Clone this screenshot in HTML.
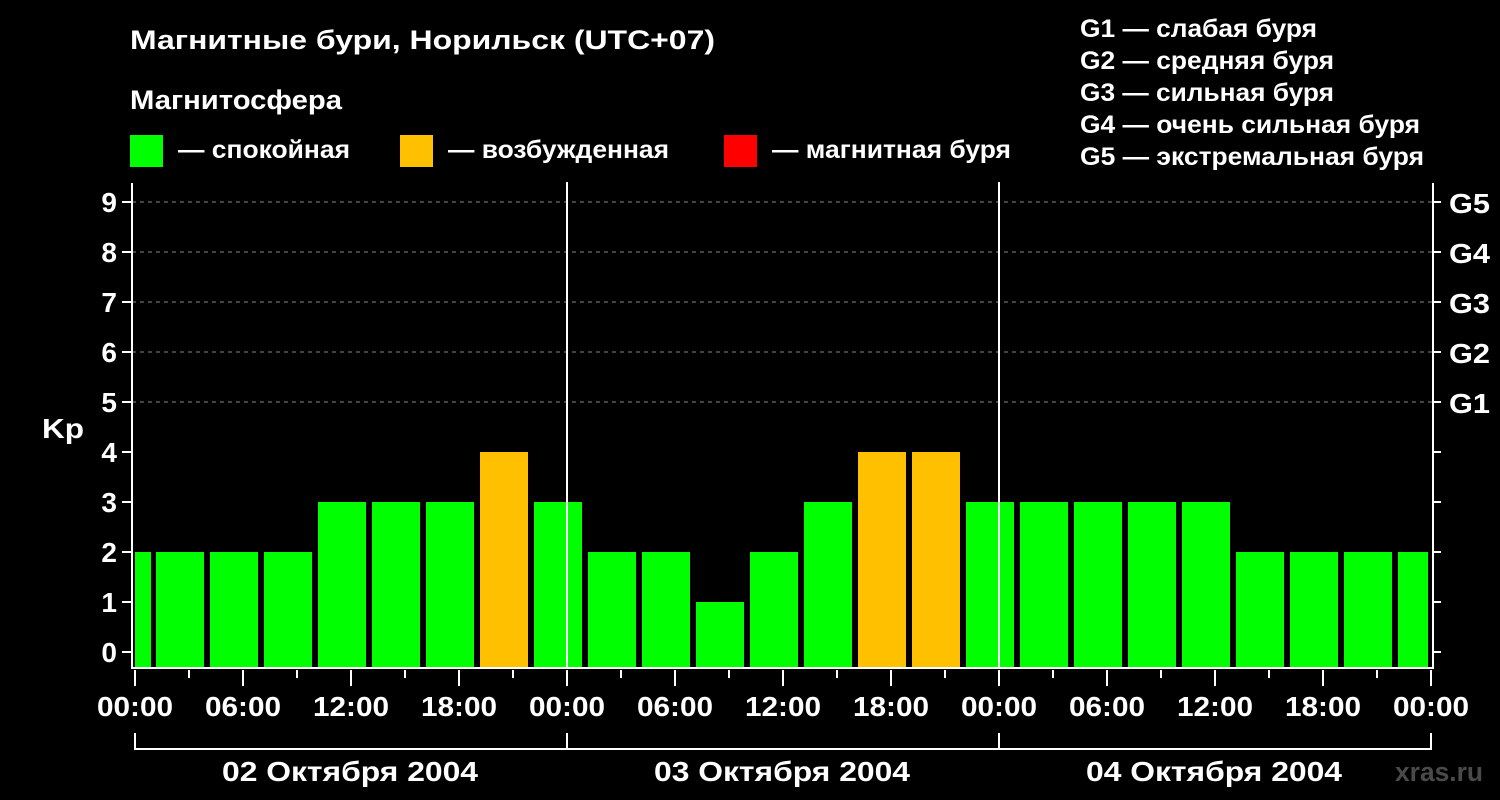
<!DOCTYPE html>
<html><head><meta charset="utf-8"><style>
html,body{margin:0;padding:0;background:#000;width:1500px;height:800px;overflow:hidden}
svg text{font-family:"Liberation Sans",sans-serif;font-weight:bold;fill:#fff}
</style></head><body>
<svg width="1500" height="800" xmlns="http://www.w3.org/2000/svg">
<rect width="1500" height="800" fill="#000"/>
<text x="130" y="49" font-size="27" textLength="585" lengthAdjust="spacingAndGlyphs">Магнитные бури, Норильск (UTC+07)</text>
<text x="130" y="109" font-size="27" textLength="212" lengthAdjust="spacingAndGlyphs">Магнитосфера</text>
<rect x="130" y="135" width="33" height="32" fill="#00ff00"/>
<text x="178" y="158" font-size="25" textLength="172" lengthAdjust="spacingAndGlyphs">— спокойная</text>
<rect x="400" y="135" width="33" height="32" fill="#ffc000"/>
<text x="448" y="158" font-size="25" textLength="221" lengthAdjust="spacingAndGlyphs">— возбужденная</text>
<rect x="724" y="135" width="33" height="32" fill="#ff0000"/>
<text x="772" y="158" font-size="25" textLength="239" lengthAdjust="spacingAndGlyphs">— магнитная буря</text>
<g font-size="25">
<text x="1080" y="37" textLength="237" lengthAdjust="spacingAndGlyphs">G1 — слабая буря</text>
<text x="1080" y="69" textLength="254" lengthAdjust="spacingAndGlyphs">G2 — средняя буря</text>
<text x="1080" y="101" textLength="254" lengthAdjust="spacingAndGlyphs">G3 — сильная буря</text>
<text x="1080" y="133" textLength="340" lengthAdjust="spacingAndGlyphs">G4 — очень сильная буря</text>
<text x="1080" y="165" textLength="344" lengthAdjust="spacingAndGlyphs">G5 — экстремальная буря</text>
</g>
<g stroke="#888" stroke-width="1" stroke-dasharray="4,4">
<line x1="132" y1="202" x2="1432" y2="202"/>
<line x1="132" y1="252" x2="1432" y2="252"/>
<line x1="132" y1="302" x2="1432" y2="302"/>
<line x1="132" y1="352" x2="1432" y2="352"/>
<line x1="132" y1="402" x2="1432" y2="402"/>
</g>
<g fill="#00ff00">
<rect x="135" y="552" width="16" height="116"/>
<rect x="156" y="552" width="48" height="116"/>
<rect x="210" y="552" width="48" height="116"/>
<rect x="264" y="552" width="48" height="116"/>
<rect x="318" y="502" width="48" height="166"/>
<rect x="372" y="502" width="48" height="166"/>
<rect x="426" y="502" width="48" height="166"/>
<rect x="534" y="502" width="48" height="166"/>
<rect x="588" y="552" width="48" height="116"/>
<rect x="642" y="552" width="48" height="116"/>
<rect x="696" y="602" width="48" height="66"/>
<rect x="750" y="552" width="48" height="116"/>
<rect x="804" y="502" width="48" height="166"/>
<rect x="966" y="502" width="48" height="166"/>
<rect x="1020" y="502" width="48" height="166"/>
<rect x="1074" y="502" width="48" height="166"/>
<rect x="1128" y="502" width="48" height="166"/>
<rect x="1182" y="502" width="48" height="166"/>
<rect x="1236" y="552" width="48" height="116"/>
<rect x="1290" y="552" width="48" height="116"/>
<rect x="1344" y="552" width="48" height="116"/>
<rect x="1398" y="552" width="30" height="116"/>
</g>
<g fill="#ffc000">
<rect x="480" y="452" width="48" height="216"/>
<rect x="858" y="452" width="48" height="216"/>
<rect x="912" y="452" width="48" height="216"/>
</g>
<g stroke="#fff" stroke-width="2" fill="none">
<path d="M132 183 V668 H1433 V183"/>
<line x1="567" y1="182" x2="567" y2="668"/>
<line x1="999" y1="182" x2="999" y2="668"/>
<path d="M122 652h10M122 602h10M122 552h10M122 502h10M122 452h10M122 402h10M122 352h10M122 302h10M122 252h10M122 202h10"/>
<path d="M1433 652h8M1433 602h8M1433 552h8M1433 502h8M1433 452h8M1433 402h8M1433 352h8M1433 302h8M1433 252h8M1433 202h8"/>
<path d="M135 670v16M243 670v16M351 670v16M459 670v16M567 670v16M675 670v16M783 670v16M891 670v16M999 670v16M1107 670v16M1215 670v16M1323 670v16M1431 670v16"/>
<path d="M189 670v8M297 670v8M405 670v8M513 670v8M621 670v8M729 670v8M837 670v8M945 670v8M1053 670v8M1161 670v8M1269 670v8M1377 670v8"/>
<path d="M135 733V749H1431V733M567 733v16M999 733v16"/>
</g>
<g font-size="28" text-anchor="end">
<text x="117" y="662">0</text><text x="117" y="612">1</text><text x="117" y="562">2</text>
<text x="117" y="512">3</text><text x="117" y="462">4</text><text x="117" y="412">5</text>
<text x="117" y="362">6</text><text x="117" y="312">7</text><text x="117" y="262">8</text>
<text x="117" y="212">9</text>
</g>
<text x="42" y="438" font-size="28" textLength="42" lengthAdjust="spacingAndGlyphs">Kp</text>
<g font-size="28">
<text x="1449" y="213" textLength="41" lengthAdjust="spacingAndGlyphs">G5</text><text x="1449" y="263" textLength="41" lengthAdjust="spacingAndGlyphs">G4</text><text x="1449" y="313" textLength="41" lengthAdjust="spacingAndGlyphs">G3</text>
<text x="1449" y="363" textLength="41" lengthAdjust="spacingAndGlyphs">G2</text><text x="1449" y="413" textLength="41" lengthAdjust="spacingAndGlyphs">G1</text>
</g>
<g font-size="28">
<text x="97" y="716" textLength="76" lengthAdjust="spacingAndGlyphs">00:00</text><text x="205" y="716" textLength="76" lengthAdjust="spacingAndGlyphs">06:00</text><text x="313" y="716" textLength="76" lengthAdjust="spacingAndGlyphs">12:00</text>
<text x="421" y="716" textLength="76" lengthAdjust="spacingAndGlyphs">18:00</text><text x="529" y="716" textLength="76" lengthAdjust="spacingAndGlyphs">00:00</text><text x="637" y="716" textLength="76" lengthAdjust="spacingAndGlyphs">06:00</text>
<text x="745" y="716" textLength="76" lengthAdjust="spacingAndGlyphs">12:00</text><text x="853" y="716" textLength="76" lengthAdjust="spacingAndGlyphs">18:00</text><text x="961" y="716" textLength="76" lengthAdjust="spacingAndGlyphs">00:00</text>
<text x="1069" y="716" textLength="76" lengthAdjust="spacingAndGlyphs">06:00</text><text x="1177" y="716" textLength="76" lengthAdjust="spacingAndGlyphs">12:00</text><text x="1285" y="716" textLength="76" lengthAdjust="spacingAndGlyphs">18:00</text>
<text x="1393" y="716" textLength="76" lengthAdjust="spacingAndGlyphs">00:00</text>
</g>
<g font-size="28">
<text x="222" y="781" textLength="256" lengthAdjust="spacingAndGlyphs">02 Октября 2004</text>
<text x="654" y="781" textLength="256" lengthAdjust="spacingAndGlyphs">03 Октября 2004</text>
<text x="1086" y="781" textLength="256" lengthAdjust="spacingAndGlyphs">04 Октября 2004</text>
</g>
<text x="1395" y="781" font-size="27" textLength="88" lengthAdjust="spacingAndGlyphs" style="fill:#4a4a4a">xras.ru</text>
</svg>
</body></html>
